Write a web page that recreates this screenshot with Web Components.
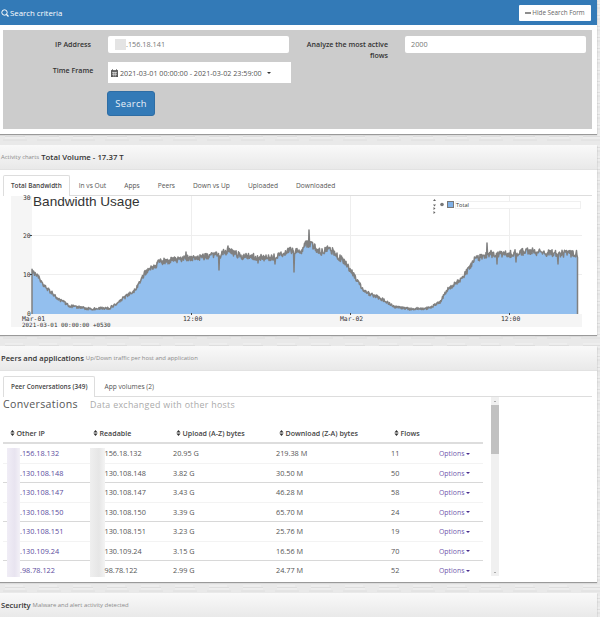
<!DOCTYPE html>
<html>
<head>
<meta charset="utf-8">
<title>Flows</title>
<style>
  html, body { margin: 0; padding: 0; height: 617px; overflow: hidden; }
  body {
    font-family: "Open Sans", "Liberation Sans", sans-serif;
    color: #555;
    background-color: #e9e9e9;
    background-image: url("data:image/svg+xml,%3Csvg xmlns='http://www.w3.org/2000/svg' width='34' height='11'%3E%3Cpath d='M5 3h18M5 6h20' stroke='%23f2f2f2'/%3E%3Cpath d='M5 4.500h20M3 8h24' stroke='%23dedede'/%3E%3C/svg%3E");
    background-size: 34px 11px;
  }
</style>
</head>
<body>

<template id="panel-tpl">
  <style>
    :host { display: block; width: 597px; background: #fff; box-shadow: 0 1px 1px #999; margin-bottom: 11px; }
    .heading {
      height: 25px; box-sizing: border-box; padding: 0 1px; display: flex; align-items: center; gap: 2px;
      background: linear-gradient(#f9f9f9, #e9e9e9); border-bottom: 1px solid #e2e2e2; white-space: nowrap;
      font-size: 7.6px; font-weight: 600; color: #333;
    }
    :host([blue]) .heading { background: #337ab7; border: 0; color: #fff; justify-content: space-between; padding-right: 6px; }
    :host([sub-first]) .heading { font-size: 7.8px; }
    ::slotted([slot=sub]) { font-size: 5.9px; font-weight: 400; color: #8a8a8a; }
    .title { display: flex; align-items: center; gap: 2px; }
    :host([sub-first]) .title { flex-direction: row-reverse; }
    .body { display: block; }
  </style>
  <div class="heading">
    <span class="title"><slot name="title"></slot><slot name="sub"></slot></span>
    <slot name="action"></slot>
  </div>
  <div class="body"><slot></slot></div>
</template>

<template id="search-tpl">
  <style>
    :host { display: block; padding: 5px 5px 5px 3px; font-size: 7.1px; color: #333; }
    .box { background: #ccc; height: 99px; box-sizing: border-box; padding-top: 6px; }
    .grid { display: grid; grid-template-columns: 105px 183px 97px 181px; column-gap: 0; grid-template-rows: 18px 21px 25px; row-gap: 8px; }
    label { font-weight: 600; text-align: center; line-height: 11px; padding: 3px 0 0 35px; white-space: nowrap; }
    label.right { text-align: right; white-space: normal; padding: 3px 0 0 0; grid-column: 3; grid-row: 1; }
    .field { background: #fff; height: 17px; width: 181px; box-sizing: border-box; padding: 0 6px; line-height: 17px; border-radius: 2px; color: #777; display: flex; font-size: 7.3px; }
    .mask { display: inline-block; width: 11px; height: 11px; margin: 3px 0 0 1px; background: #e4e4e4; }
    .second { margin-left: 17px; grid-column: 4; grid-row: 1; }
    .date { background: #fff; width: 183px; box-sizing: border-box; padding-left: 3px; display: flex; align-items: center; gap: 2px; color: #555; font-size: 7.2px; white-space: nowrap; }
    .caret { width: 0; height: 0; border: 2.5px solid transparent; border-top-color: #333; border-bottom: 0; margin-left: 3px; }
    button {
      grid-column: 2; justify-self: start; margin-left: -1px; width: 48px; height: 25px; padding: 0; border: 1px solid #2e6da4; border-radius: 3px;
      background: #337ab7; color: #e8f0f7; font: 400 9.4px "Open Sans", sans-serif; letter-spacing: .3px;
    }
  </style>
  <div class="box">
    <div class="grid">
      <label>IP Address</label>
      <div class="field"><span class="mask"></span><span>.156.18.141</span></div>
      <label class="right">Analyze the most active flows</label>
      <div class="field second">2000</div>
      <label>Time Frame</label>
      <div class="date">
        <svg width="7" height="8" viewBox="0 0 7 8"><path d="M0 1.5h7V8H0z M1.5 0v2 M5.500 0v2" fill="#666" stroke="#444" stroke-width=".6"/><path d="M1 3.500h5M1 5.300h5M2.700 3v4.500M4.300 3v4.500" stroke="#fff" stroke-width=".5"/></svg>
        <span>2021-03-01 00:00:00 - 2021-03-02 23:59:00</span><span class="caret"></span>
      </div>
      <div style="grid-column:1"></div>
      <button type="button">Search</button>
    </div>
  </div>
</template>

<template id="tabs-tpl">
  <style>
    :host { display: flex; margin: 5px 5px 0 3px; border-bottom: 1px solid #ddd; height: 21px; box-sizing: border-box; font-size: 6.65px; color: #555; }
    .tabs { display: flex; }
  </style>
  <div class="tabs"><slot></slot></div>
</template>

<template id="tab-tpl">
  <style>
    :host { display: block; height: 20px; box-sizing: border-box; padding: 0 8px; line-height: 19px; white-space: nowrap; border: 1px solid transparent; border-bottom: 0; }
    :host([active]) { background: #fff; border-color: #ddd; border-radius: 2px 2px 0 0; font-size: 6.4px; font-weight: 600; color: #444; height: 21px; padding: 0 7px; }
  </style>
  <slot></slot>
</template>

<template id="chart-tpl">
  <style>
    :host { display: block; height: 139px; }
    svg { display: block; overflow: visible; font-family: "DejaVu Sans Mono", "Liberation Mono", monospace; font-size: 6.4px; fill: #333; }
    .title { font: 400 13.6px "Liberation Sans", sans-serif; fill: #333; }
    .legend { font: 400 5.6px "Open Sans", sans-serif; fill: #333; }
  </style>
  <svg width="597" height="132" viewBox="0 196 597 132">
    <rect x="11" y="196" width="21" height="131" fill="#f5f5f5"/>
    <rect x="11" y="314" width="571" height="13" fill="#f5f5f5"/>
    <g stroke="#eee" stroke-width="1">
      <path d="M32 235.500H582M32 274.500H582M191.500 196V314M350.500 196V314M509.500 196V314"/>
    </g>
    <path id="area" fill="#93bfee"/>
    <path id="line" fill="none" stroke="#808080" stroke-width="1.500" stroke-linejoin="round"/>
    <path d="M30 235.500h2M30 274.500h2M191.500 313v2M350.500 313v2M509.500 313v2" stroke="#444" stroke-width="1"/>
    <text x="23" y="200">30</text>
    <text x="23" y="238">20</text>
    <text x="23" y="277">10</text>
    <text x="27" y="315.500">0</text>
    <text x="22" y="321">Mar-01</text>
    <text x="183" y="321">12:00</text>
    <text x="340" y="321">Mar-02</text>
    <text x="501" y="321">12:00</text>
    <text x="22" y="326.500" style="font-size:5.9px">2021-03-01 00:00:00 +0530</text>
    <text class="title" x="33" y="206">Bandwidth Usage</text>
    <path d="M433 201h3l-1.500-2zM433 204.500h3l-1.500 2zM433.500 207l2 1.500-2 1.500zM433.500 211l2 1.500-2 1.500z" fill="#666"/>
    <circle cx="442" cy="204.500" r="1.800" fill="#777"/>
    <rect x="447.500" y="201.500" width="6" height="6" fill="#7fb0e6" stroke="#777"/>
    <rect x="455.500" y="201.500" width="125" height="7" fill="#fff" stroke="#f0f0f0"/>
    <text class="legend" x="456" y="206.500">Total</text>
  </svg>
</template>

<template id="table-tpl">
  <style>
    :host { display: flex; margin-left: 3px; height: 185px; align-items: flex-start; }
    .scroll { width: 488px; height: 180px; overflow: hidden; }
    .head { display: flex; align-items: baseline; gap: 12px; height: 22px; box-sizing: border-box; white-space: nowrap; }
    .head b { font-weight: 400; font-size: 10.6px; letter-spacing: .35px; color: #555; }
    .head i { font-style: normal; font-size: 8.85px; letter-spacing: .3px; color: #aaa; }
    .cols { width: 480px; margin-top: 8px; height: 12px; box-sizing: border-box; font-size: 7.1px; font-weight: 600; color: #444; white-space: nowrap; display: grid; grid-template-columns: 83px 83px 103px 115px 48px 48px; padding-left: 6.5px; }
    .cols span { display: flex; align-items: center; gap: 2px; }
    .line { width: 480px; height: 2px; background: #ddd; margin-top: 3px; }
    .bar { width: 8px; height: 179px; background: #f0f0f0; display: flex; flex-direction: column; align-items: center; }
    .arrow { height: 8px; flex: none; display: flex; align-items: center; justify-content: center; }
    .arrow::before { content: ""; border: 1.500px solid transparent; border-bottom-color: #666; border-top: 0; }
    .arrow.down { margin-top: auto; }
    .arrow.down::before { border-top: 1.500px solid #666; border-bottom: 0; }
    .thumb { width: 100%; height: 49px; background: #c1c1c1; }
  </style>
  <div class="scroll">
    <div class="head"><b>Conversations</b><i>Data exchanged with other hosts</i></div>
    <div class="cols">
      <span><svg width="5" height="6" viewBox="0 0 5 6"><path d="M.4 2.600h4.200L2.500 0zM.4 3.400h4.200L2.500 6z" fill="#333"/></svg>Other IP</span>
      <span><svg width="5" height="6" viewBox="0 0 5 6"><path d="M.4 2.600h4.200L2.500 0zM.4 3.400h4.200L2.500 6z" fill="#333"/></svg>Readable</span>
      <span><svg width="5" height="6" viewBox="0 0 5 6"><path d="M.4 2.600h4.200L2.500 0zM.4 3.400h4.200L2.500 6z" fill="#333"/></svg>Upload (A-Z) bytes</span>
      <span><svg width="5" height="6" viewBox="0 0 5 6"><path d="M.4 2.600h4.200L2.500 0zM.4 3.400h4.200L2.500 6z" fill="#333"/></svg>Download (Z-A) bytes</span>
      <span><svg width="5" height="6" viewBox="0 0 5 6"><path d="M.4 2.600h4.200L2.500 0zM.4 3.400h4.200L2.500 6z" fill="#333"/></svg>Flows</span>
    </div>
    <div class="line"></div>
    <slot></slot>
  </div>
  <div class="bar"><span class="arrow"></span><div class="thumb"></div><span class="arrow down"></span></div>
</template>

<template id="row-tpl">
  <style>
    :host { display: grid; width: 480px; height: 19.500px; box-sizing: border-box; grid-template-columns: 83px 83px 103px 115px 48px 44px; padding-left: 4px; font-size: 7.3px; line-height: 19.500px; color: #555; white-space: nowrap; box-shadow: inset 0 -1px 0 #f3f3f3; }
    :host([strong]) { box-shadow: inset 0 -1px 0 #d8d8d8; }
    .cell { display: flex; }
    .mask { width: 13px; flex: none; margin-bottom: -1px; background: linear-gradient(90deg, #efefef, #e6e6e6 60%, #f4f4f4); }
    .ip .mask { background: linear-gradient(90deg, #f0edf6, #e8e4f0 60%, #f3f1f7); }
    :host([first]) .mask { margin-top: 4px; }
    a { color: #5a4b9d; text-decoration: none; }
    .opt { color: #6f58ad; display: flex; align-items: center; gap: 2px; font-size: 6.9px; }
    .opt::after { content: ""; border: 2px solid transparent; border-top-color: #4b2f8f; border-bottom: 0; }
  </style>
  <div class="cell ip"><span class="mask"></span><a href="#"></a></div>
  <div class="cell rd"><span class="mask" style="width:14.500px"></span><span class="t"></span></div>
  <div class="cell up"></div>
  <div class="cell down"></div>
  <div class="cell flows"></div>
  <div class="cell opt">Options</div>
</template>

<script>
// shared base: clones its template in an open shadow root
class TplElement extends HTMLElement {
  constructor(id) {
    super();
    this.attachShadow({ mode: 'open' });
    this.shadowRoot.appendChild(document.getElementById(id).content.cloneNode(true));
  }
}

class AppPanel extends TplElement { constructor() { super('panel-tpl'); } }
class SearchForm extends TplElement { constructor() { super('search-tpl'); } }
class AppTabs extends TplElement { constructor() { super('tabs-tpl'); } }
class AppTab extends TplElement { constructor() { super('tab-tpl'); } }
class PeerTable extends TplElement { constructor() { super('table-tpl'); } }

class PeerRow extends TplElement {
  constructor() { super('row-tpl'); }
  connectedCallback() {
    const r = this.shadowRoot;
    r.querySelector('a').textContent = '.' + this.getAttribute('ip');
    r.querySelector('.t').textContent = this.getAttribute('ip');
    r.querySelector('.up').textContent = this.getAttribute('up');
    r.querySelector('.down').textContent = this.getAttribute('down');
    r.querySelector('.flows').textContent = this.getAttribute('flows');
  }
}

class BandwidthChart extends TplElement {
  constructor() { super('chart-tpl'); }
  connectedCallback() {
    // curve read off the reference, [x, y] in page pixels
    const pts = [[32,272],[38,276],[45,287],[60,300],[70,306],[90,309],[110,308],[125,297],[135,290],[145,273],[160,262],
      [175,260],[191,258],[220,255],[228,250],[240,256],[270,258],[290,251],[300,252],[306,244],[312,245],[320,252],[330,249],
      [345,262],[357,280],[365,292],[380,298],[395,307],[410,309],[430,308],[440,302],[447,290],[460,280],[470,268],[475,259],
      [490,254],[510,254],[530,251],[545,253],[577,254]];
    const spikes = { 219: 270, 294: 272, 309: 230, 228: 246, 487: 243, 497: 264, 186: 252, 258: 263, 275: 264, 516: 262, 558: 264 };
    let seed = 17;
    const rnd = () => { seed = (seed * 1103515 + 12345) % 2147483648; return seed / 2147483648 - 0.5; };
    let d = '', i = 0;
    for (let x = 32; x <= 577.5; x += 0.5) {
      while (i < pts.length - 2 && pts[i + 1][0] < x) i++;
      const [x0, y0] = pts[i], [x1, y1] = pts[i + 1];
      let y = y0 + (y1 - y0) * (x - x0) / (x1 - x0);
      const level = (314 - y) / 60;
      y += rnd() * (2 + 5 * level);
      const k = Math.round(x);
      if (spikes[k] && x === k) y = spikes[k];
      d += (d ? 'L' : 'M') + x + ' ' + y.toFixed(1);
    }
    const r = this.shadowRoot;
    r.getElementById('line').setAttribute('d', 'M32 314L' + d.slice(1) + 'L577.5 314');
    r.getElementById('area').setAttribute('d', 'M32 314L' + d.slice(1) + 'L577.5 314Z');
  }
}

customElements.define('app-panel', AppPanel);
customElements.define('search-form', SearchForm);
customElements.define('app-tabs', AppTabs);
customElements.define('app-tab', AppTab);
customElements.define('peer-table', PeerTable);
customElements.define('peer-row', PeerRow);
customElements.define('bandwidth-chart', BandwidthChart);
</script>

<app-panel blue>
  <span slot="title" style="display:flex;align-items:center;gap:1px;font-size:7.8px">
    <svg width="8" height="8" viewBox="0 0 8 8"><circle cx="3.500" cy="3.500" r="2.700" fill="none" stroke="#fff"/><path d="M5.500 5.500L7.500 7.500" stroke="#fff" stroke-width="1.200"/></svg>
    <span style="font-weight:400">Search criteria</span>
  </span>
  <span slot="action" style="display:flex;align-items:center;gap:1px;background:#fff;color:#666;font-size:6.3px;font-weight:400;height:16px;width:72px;justify-content:center;border-radius:1px">
    <svg width="6" height="6" viewBox="0 0 6 6"><path d="M0 3h6" stroke="#444" stroke-width="1.200"/></svg>Hide Search Form
  </span>
  <search-form></search-form>
</app-panel>

<app-panel sub-first>
  <span slot="title">Total Volume - 17.37 T</span>
  <span slot="sub">Activity charts</span>
  <app-tabs>
    <app-tab active>Total Bandwidth</app-tab>
    <app-tab>In vs Out</app-tab>
    <app-tab>Apps</app-tab>
    <app-tab>Peers</app-tab>
    <app-tab>Down vs Up</app-tab>
    <app-tab>Uploaded</app-tab>
    <app-tab>Downloaded</app-tab>
  </app-tabs>
  <bandwidth-chart></bandwidth-chart>
</app-panel>

<app-panel>
  <span slot="title">Peers and applications</span>
  <span slot="sub">Up/Down traffic per host and application</span>
  <app-tabs>
    <app-tab active>Peer Conversations (349)</app-tab>
    <app-tab>App volumes (2)</app-tab>
  </app-tabs>
  <peer-table>
    <peer-row first ip="156.18.132" up="20.95 G" down="219.38 M" flows="11"></peer-row>
    <peer-row strong ip="130.108.148" up="3.82 G" down="30.50 M" flows="50"></peer-row>
    <peer-row ip="130.108.147" up="3.43 G" down="46.28 M" flows="58"></peer-row>
    <peer-row strong ip="130.108.150" up="3.39 G" down="65.70 M" flows="24"></peer-row>
    <peer-row ip="130.108.151" up="3.23 G" down="25.76 M" flows="19"></peer-row>
    <peer-row strong ip="130.109.24" up="3.15 G" down="16.56 M" flows="70"></peer-row>
    <peer-row ip="98.78.122" up="2.99 G" down="24.77 M" flows="52"></peer-row>
  </peer-table>
</app-panel>

<app-panel>
  <span slot="title">Security</span>
  <span slot="sub">Malware and alert activity detected</span>
</app-panel>

</body>
</html>
